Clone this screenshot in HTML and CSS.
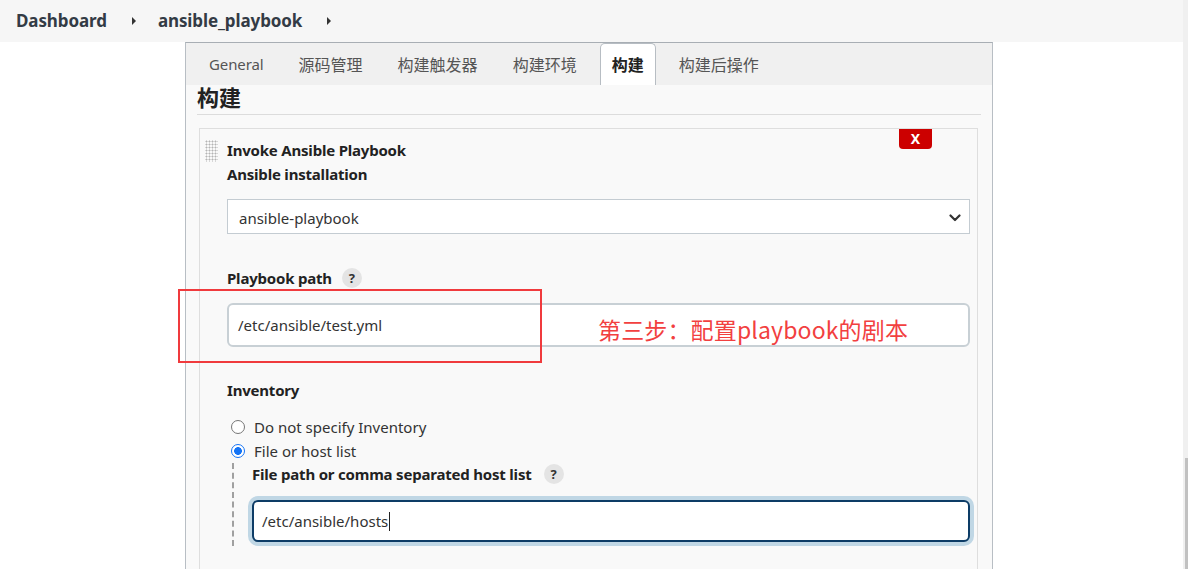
FILE: index.html
```html
<!DOCTYPE html>
<html lang="zh">
<head>
<meta charset="utf-8">
<title>ansible_playbook Config</title>
<link rel="stylesheet" href="styles.css">
</head>
<body>
<div class="page">
  <div class="main">
    <header class="topbar">
      <span class="crumb">Dashboard</span>
      <span class="crumb-arrow"></span>
      <span class="crumb">ansible_playbook</span>
      <span class="crumb-arrow"></span>
    </header>
    <div class="panel">
      <nav class="tabs">
        <span class="tab latin">General</span>
        <span class="tab">源码管理</span>
        <span class="tab">构建触发器</span>
        <span class="tab">构建环境</span>
        <span class="tab active">构建</span>
        <span class="tab">构建后操作</span>
      </nav>
      <div class="content">
        <h2 class="section-title">构建</h2>
        <div class="card">
          <button class="delete-btn">X</button>
          <div class="card-head">
            <span class="handle"></span>
            <div class="card-titles">
              <div class="card-title">Invoke Ansible Playbook</div>
              <div class="label">Ansible installation</div>
            </div>
          </div>
          <div class="card-body">
            <div class="select">
              <span>ansible-playbook</span>
              <svg class="chevron" width="12" height="8" viewBox="0 0 12 8"><path d="M1.5 1.5 L6 6 L10.5 1.5" fill="none" stroke="#333" stroke-width="2.2" stroke-linecap="round" stroke-linejoin="round"/></svg>
            </div>

            <div class="label-row pb-label">
              <span class="label">Playbook path</span>
              <span class="help">?</span>
            </div>
            <div class="input-wrap">
              <div class="input">/etc/ansible/test.yml</div>
              <div class="annot-box"></div>
              <div class="annot-text">第三步：配置playbook的剧本</div>
            </div>

            <div class="label inv-label">Inventory</div>
            <div class="radio-row first">
              <span class="radio"></span>
              <span>Do not specify Inventory</span>
            </div>
            <div class="radio-row">
              <span class="radio checked"></span>
              <span>File or host list</span>
            </div>
            <div class="nested">
              <div class="label-row">
                <span class="label">File path or comma separated host list</span>
                <span class="help">?</span>
              </div>
              <div class="input focused">/etc/ansible/hosts<span class="caret"></span></div>
            </div>
          </div>
        </div>
      </div>
    </div>
  </div>
  <div class="scrollbar"><div class="thumb"></div></div>
</div>
</body>
</html>
```
FILE: styles.css
```css
* { box-sizing: border-box; }
html, body { margin: 0; padding: 0; height: 100%; overflow: hidden; }
body {
  background: #fff;
  font-family: "Noto Sans", "Noto Sans CJK SC", sans-serif;
  color: #333;
  font-size: 15px;
}
.page { display: flex; height: 569px; }
.main { flex: 1; min-width: 0; }
.scrollbar {
  width: 5px;
  background: #f0f0f0;
  display: flex;
  flex-direction: column;
  justify-content: flex-end;
  padding-left: 2px;
}
.thumb { height: 111px; background: #c1c1c1; }

.topbar {
  height: 42px;
  background: #f6f6f6;
  display: flex;
  align-items: center;
  padding-left: 16px;
  padding-bottom: 1px;
}
.crumb {
  font-size: 17px;
  font-weight: 700;
  color: #333b45;
  letter-spacing: -0.1px;
}
.crumb-arrow {
  width: 0; height: 0;
  border-left: 4px solid #333;
  border-top: 4px solid transparent;
  border-bottom: 4px solid transparent;
  margin: 0 22px 0 25px;
}

.panel {
  margin-left: 185px;
  width: 808px;
  height: 600px;
  border: 1px solid #b8bec4;
  border-top-color: #a8aeb4;
  border-bottom: none;
  background: #f9f9f9;
}
.tabs {
  height: 42px;
  background: #f0f0f0;
  display: flex;
  align-items: stretch;
  gap: 11px;
  padding: 0 0 0 11px;
}
.tab {
  padding: 0 12px 1px;
  display: flex;
  align-items: center;
  font-size: 16px;
  color: #555;
}
.tab.latin { font-size: 15px; letter-spacing: -0.1px; }
.tab.active {
  background: #fff;
  border: 1px solid #b7bdc3;
  border-bottom: none;
  border-radius: 5px 5px 0 0;
  color: #222;
  font-weight: 700;
  padding: 0 11px 1px;
}
.content { padding: 0 11px; }
.section-title {
  margin: 0;
  font-size: 22px;
  line-height: 24px;
  font-weight: 700;
  color: #222;
  padding-bottom: 5px;
  border-bottom: 1px solid #dcdcdc;
}
.card {
  position: relative;
  margin: 13px 3px 0 2px;
  border: 1px solid #dedede;
  border-bottom: none;
  height: 460px;
  padding: 9px 7px 0 5px;
}
.delete-btn {
  position: absolute;
  top: 0;
  right: 45px;
  width: 33px;
  height: 20px;
  background: #cc0000;
  color: #fff;
  border: none;
  border-radius: 0 0 4px 4px;
  font: 700 14px "Noto Sans", sans-serif;
  line-height: 20px;
  padding: 0;
}
.card-head { display: flex; gap: 9px; }
.handle {
  width: 13px;
  height: 22px;
  background-image: radial-gradient(circle, #b4b4b4 0.9px, transparent 1.1px);
  background-size: 3px 3px;
  margin-top: 2px;
}
.card-titles { display: flex; flex-direction: column; }
.card-title, .label {
  font-size: 15px;
  font-weight: 700;
  color: #222;
  line-height: 24px;
  letter-spacing: -0.2px;
}
.card-body { padding-left: 22px; }
.select {
  margin-top: 13px;
  height: 35px;
  background: #fff;
  border: 1px solid #c4ccd2;
  display: flex;
  align-items: center;
  justify-content: space-between;
  padding: 3px 8px 0 11px;
  font-size: 15px;
  color: #333;
}
.label-row { display: flex; align-items: center; gap: 10px; }
.pb-label { margin-top: 32px; }
.help {
  width: 20px; height: 20px;
  border-radius: 50%;
  background: #e4e4e4;
  font-size: 13px;
  font-weight: 700;
  color: #333;
  display: flex;
  align-items: center;
  justify-content: center;
}
.input-wrap { position: relative; margin-top: 13px; }
.input {
  height: 44px;
  background: #fff;
  border: 2px solid #c8d0d5;
  border-radius: 6px;
  display: flex;
  align-items: center;
  padding-left: 9px;
  font-size: 15px;
  color: #333;
}
.annot-box {
  position: absolute;
  left: -49px;
  top: -14px;
  width: 364px;
  height: 74px;
  border: 2px solid #f03a3d;
}
.annot-text {
  position: absolute;
  left: 371px;
  top: 11px;
  font-size: 23px;
  line-height: 30px;
  color: #f2403f;
  font-family: "Noto Sans CJK SC", "Noto Sans", sans-serif;
  letter-spacing: 0.15px;
}
.inv-label { margin-top: 31px; }
.radio-row {
  display: flex;
  align-items: center;
  gap: 9px;
  height: 24px;
  padding-left: 4px;
  font-size: 15px;
  color: #333;
}
.radio-row.first { margin-top: 13px; }
.radio {
  width: 14px; height: 14px;
  border: 1px solid #767676;
  border-radius: 50%;
  background: #fff;
  flex: none;
}
.radio.checked {
  border: 1.6px solid #1574f5;
  background: radial-gradient(circle, #1574f5 0 3.6px, #fff 4.1px);
}
.nested {
  margin-left: 5px;
  padding-left: 18px;
  border-left: 2px dashed #a0a0a0;
  padding-bottom: 4px;
}
.nested .label-row { height: 22px; gap: 12px; }
.input.focused {
  margin-top: 15px;
  height: 42px;
  border-color: #0d3c66;
  box-shadow: 0 0 0 4px #c0d7e5;
  padding-left: 8px;
}
.caret {
  display: inline-block;
  width: 1px;
  height: 19px;
  background: #222;
  margin-left: 1px;
}
```
